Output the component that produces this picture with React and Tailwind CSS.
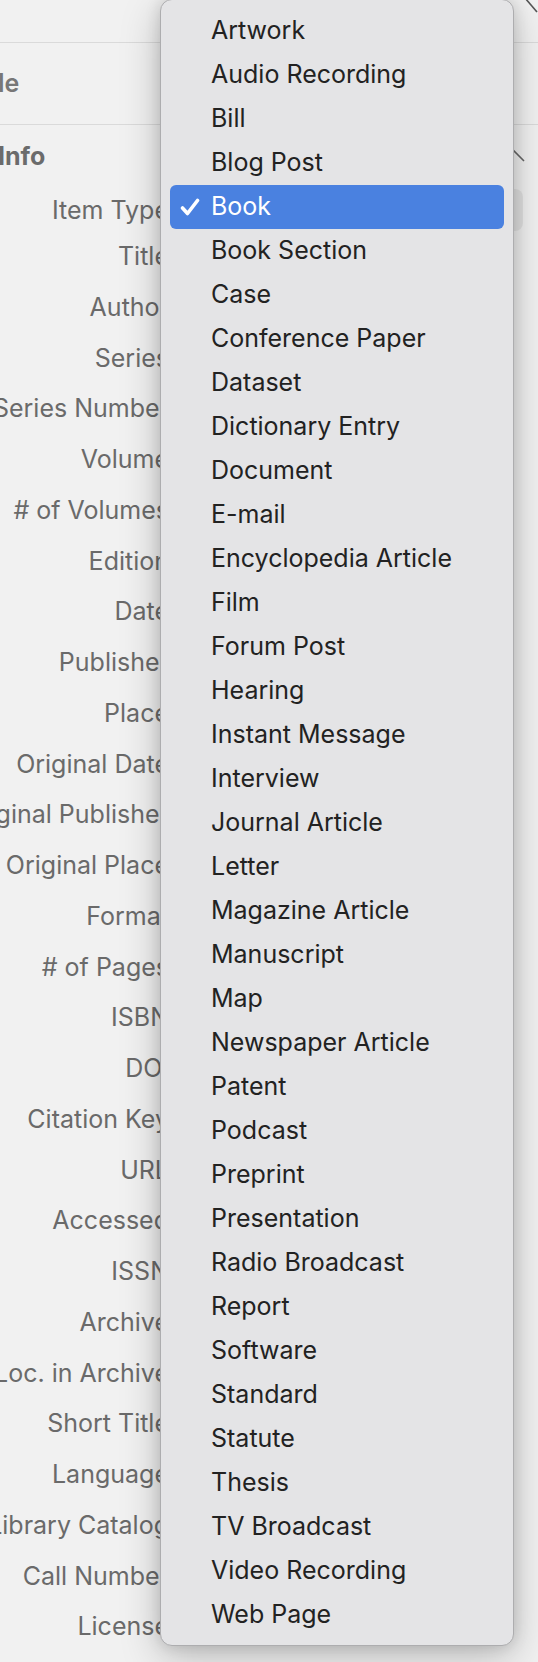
import React from 'react';

const labels = [
  'Title', 'Author', 'Series', 'Series Number', 'Volume', '# of Volumes', 'Edition', 'Date',
  'Publisher', 'Place', 'Original Date', 'Original Publisher', 'Original Place', 'Format',
  '# of Pages', 'ISBN', 'DOI', 'Citation Key', 'URL', 'Accessed', 'ISSN', 'Archive',
  'Loc. in Archive', 'Short Title', 'Language', 'Library Catalog', 'Call Number', 'License',
];

const types = [
  'Artwork', 'Audio Recording', 'Bill', 'Blog Post', 'Book', 'Book Section', 'Case',
  'Conference Paper', 'Dataset', 'Dictionary Entry', 'Document', 'E-mail',
  'Encyclopedia Article', 'Film', 'Forum Post', 'Hearing', 'Instant Message', 'Interview',
  'Journal Article', 'Letter', 'Magazine Article', 'Manuscript', 'Map', 'Newspaper Article',
  'Patent', 'Podcast', 'Preprint', 'Presentation', 'Radio Broadcast', 'Report', 'Software',
  'Standard', 'Statute', 'Thesis', 'TV Broadcast', 'Video Recording', 'Web Page',
];

function Check() {
  return (
    <svg width="20" height="18" viewBox="0 0 20 18" fill="none">
      <path d="M2.5 10 L7.5 15.5 L17.5 2.5" stroke="#fff" strokeWidth="3.6" strokeLinecap="round" strokeLinejoin="round" />
    </svg>
  );
}

function Label({ children }) {
  return (
    <span className="w-[169px] shrink-0 flex justify-end text-[#6a6a6a] whitespace-nowrap">
      <span>{children}</span>
    </span>
  );
}

export default function App() {
  return (
    <div className="relative w-[538px] h-[1662px] overflow-hidden bg-[#f1f1f1] font-['Inter','Liberation_Sans',sans-serif] text-[25px]">
      {/* pane underneath */}
      <div className="flex flex-col">
        <div className="h-[43px] flex justify-end border-b border-[#dadada]">
          <svg width="14" height="16" viewBox="0 0 14 16">
            <path d="M1 -2 L13 12" stroke="#555" strokeWidth="1.6" />
          </svg>
        </div>
        <div className="h-[82px] flex items-center border-b border-[#dadada]">
          <span className="-ml-[34px] font-semibold text-[#777]">Title</span>
        </div>
        <div className="h-[64px] flex items-center justify-between">
          <span className="-ml-[2px] font-bold text-[#6b6b6b]">Info</span>
          <svg width="28" height="16" viewBox="0 0 28 16" className="mr-[12px] -mt-[4px]">
            <path d="M2 14 L14 2 L26 14" stroke="#666" strokeWidth="1.6" fill="none" />
          </svg>
        </div>
        <div className="h-[42.6px] flex items-center">
          <Label>Item Type</Label>
          <div className="flex-1 ml-[10px] mr-[15px] h-[42px] rounded-[8px] bg-[#e2e2e2]" />
        </div>
        {labels.map((l) => (
          <div key={l} className="h-[50.75px] flex items-center">
            <Label>{l}</Label>
          </div>
        ))}
      </div>

      {/* popup menu */}
      <div className="absolute left-[160px] top-[-1px] w-[354px] h-[1647px] pt-[9px] rounded-[12px] bg-[#e4e4e6] border border-[#adadaf] shadow-[0_12px_40px_rgba(0,0,0,0.22),0_0_16px_rgba(0,0,0,0.14)]">
        {types.map((t) => (
          t === 'Book' ? (
            <div key={t} className="mx-[9px] h-[44px] flex items-center rounded-[6px] bg-[#4a81e0] text-white">
              <span className="w-[41px] pl-[10px] flex items-center"><Check /></span>
              <span>{t}</span>
            </div>
          ) : (
            <div key={t} className="mx-[9px] h-[44px] flex items-center pl-[41px] text-[#222]">
              {t}
            </div>
          )
        ))}
      </div>
    </div>
  );
}
